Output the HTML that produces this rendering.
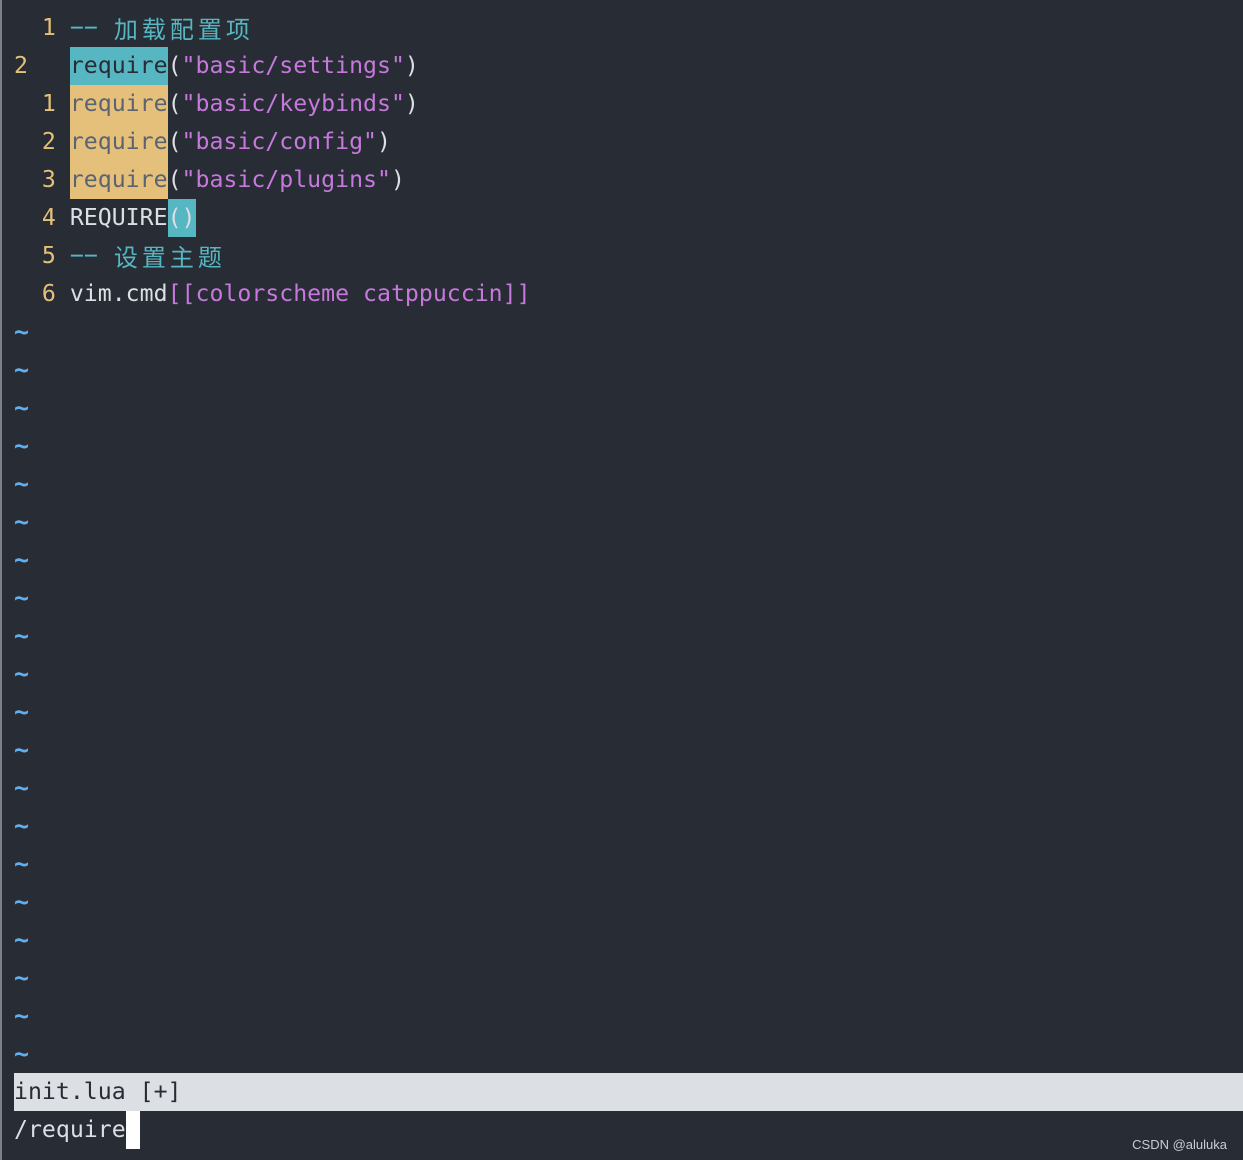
<!DOCTYPE html>
<html><head><meta charset="utf-8"><style>
html,body{margin:0;padding:0;}
body{width:1243px;height:1160px;background:#282c34;position:relative;overflow:hidden;
font-family:"DejaVu Sans Mono","Liberation Mono","Noto Sans CJK SC",monospace;font-size:23.2px;}
.lb{position:absolute;left:0;top:0;width:2px;height:1160px;background:#7d7f84;}
.r{position:absolute;left:14px;height:38px;line-height:38px;white-space:pre;color:#dcdfe4;}
.n{color:#e5c07b}.c{color:#56b6c2}.p{color:#c678dd}.t{color:#61afef;font-weight:bold;font-size:25px}
.hc{background:#56b6c2;color:#282c34;display:inline-block;height:38px;vertical-align:top}
.ho{background:#e5c07b;color:#5c6370;display:inline-block;height:38px;vertical-align:top}
.cj{font-family:"Noto Sans CJK SC",sans-serif;display:inline-block;width:28px;text-align:center;height:38px;line-height:38px;vertical-align:top;font-size:24px}
.d{display:inline-block;width:14px;text-align:center;vertical-align:top}
.st{position:absolute;left:14px;top:1073px;width:1229px;height:38px;line-height:38px;background:#dcdfe4;color:#282c34;white-space:pre;}
.cur{display:inline-block;width:14px;height:38px;background:#fff;vertical-align:top}
.wm{position:absolute;right:16px;top:1137px;font-family:"Liberation Sans",sans-serif;font-size:13px;color:#c8ccd2;}
</style></head><body>
<div class="lb"></div>
<div class="r" style="top:9px"><span class="n">  1 </span><span class="c"><span class="d">−</span><span class="d">−</span> <span class="cj">加</span><span class="cj">载</span><span class="cj">配</span><span class="cj">置</span><span class="cj">项</span></span></div>
<div class="r" style="top:47px"><span class="n">2   </span><span class="hc">require</span>(<span class="p">"basic/settings"</span>)</div>
<div class="r" style="top:85px"><span class="n">  1 </span><span class="ho">require</span>(<span class="p">"basic/keybinds"</span>)</div>
<div class="r" style="top:123px"><span class="n">  2 </span><span class="ho">require</span>(<span class="p">"basic/config"</span>)</div>
<div class="r" style="top:161px"><span class="n">  3 </span><span class="ho">require</span>(<span class="p">"basic/plugins"</span>)</div>
<div class="r" style="top:199px"><span class="n">  4 </span>REQUIRE<span class="hc" style="color:#dcdfe4">()</span></div>
<div class="r" style="top:237px"><span class="n">  5 </span><span class="c"><span class="d">−</span><span class="d">−</span> <span class="cj">设</span><span class="cj">置</span><span class="cj">主</span><span class="cj">题</span></span></div>
<div class="r" style="top:275px"><span class="n">  6 </span>vim.cmd<span class="p">[[colorscheme catppuccin]]</span></div>
<div class="r t" style="top:313px">~</div>
<div class="r t" style="top:351px">~</div>
<div class="r t" style="top:389px">~</div>
<div class="r t" style="top:427px">~</div>
<div class="r t" style="top:465px">~</div>
<div class="r t" style="top:503px">~</div>
<div class="r t" style="top:541px">~</div>
<div class="r t" style="top:579px">~</div>
<div class="r t" style="top:617px">~</div>
<div class="r t" style="top:655px">~</div>
<div class="r t" style="top:693px">~</div>
<div class="r t" style="top:731px">~</div>
<div class="r t" style="top:769px">~</div>
<div class="r t" style="top:807px">~</div>
<div class="r t" style="top:845px">~</div>
<div class="r t" style="top:883px">~</div>
<div class="r t" style="top:921px">~</div>
<div class="r t" style="top:959px">~</div>
<div class="r t" style="top:997px">~</div>
<div class="r t" style="top:1035px">~</div>
<div class="st">init.lua [+]</div>
<div class="r" style="top:1111px">/require<span class="cur"></span></div>
<div class="wm">CSDN @aluluka</div>
</body></html>
